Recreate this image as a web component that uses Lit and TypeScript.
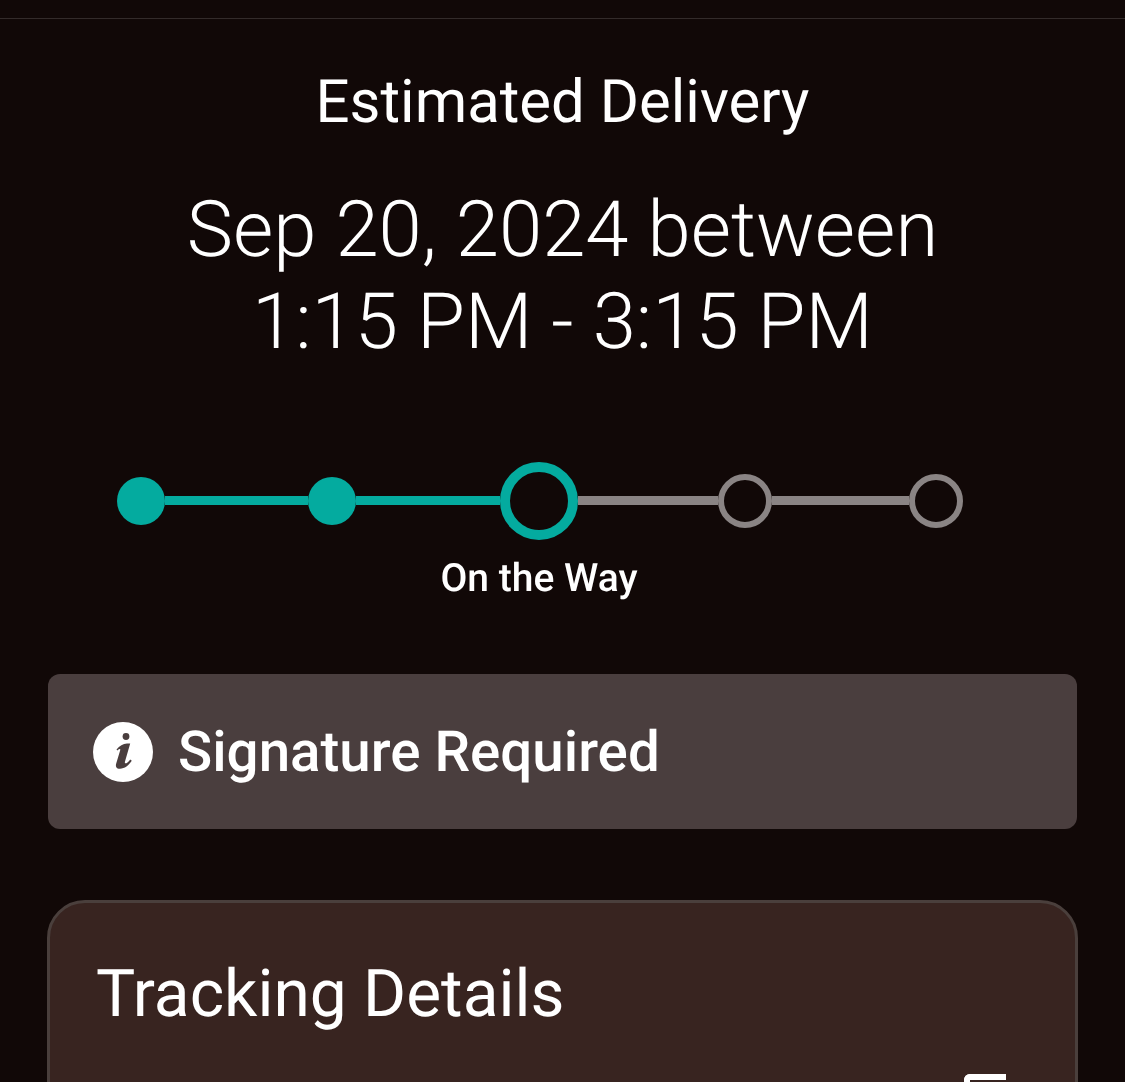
import { LitElement, html, css } from "lit";
import { customElement } from "lit/decorators.js";

@customElement("app-root")
export class AppRoot extends LitElement {
  static styles = css`
    :host {
      display: block;
      height: 1082px;
      overflow: hidden;
      background: #110807;
      color: #fff;
      font-family: Roboto, "Liberation Sans", sans-serif;
    }

    /* own layer: keeps the text on grayscale antialiasing, like the phone capture */
    .page {
      will-change: transform;
      text-rendering: geometricPrecision;
    }

    .divider {
      height: 1px;
      margin-top: 18px;
      background: #332b2a;
    }

    .eta {
      display: flex;
      flex-direction: column;
      align-items: center;
      padding-top: 47px;
    }

    .eta-label {
      font-size: 59.9px;
      line-height: 72px;
      font-weight: 400;
    }

    .eta-time {
      margin-top: 47px;
      font-size: 77.9px;
      line-height: 92px;
      font-weight: 300;
      text-align: center;
    }

    .stepper {
      display: grid;
      grid-template-columns: 48px 143px 48px 144px 78px 140px 54px 137px 54px;
      align-items: center;
      justify-content: start;
      margin: 93px 0 0 117px;
    }

    .dot {
      box-sizing: border-box;
      border-radius: 50%;
      width: 48px;
      height: 48px;
      background: #04ab9f;
    }

    .dot.current {
      width: 78px;
      height: 78px;
      background: none;
      border: 10px solid #04ab9f;
    }

    .dot.todo {
      width: 54px;
      height: 54px;
      background: none;
      border: 6px solid #8a8484;
    }

    .line {
      height: 9px;
      margin-bottom: 2px;
      background: #04ab9f;
    }

    .line.todo {
      background: #8a8484;
    }

    .step-label {
      grid-column: 5;
      justify-self: center;
      white-space: nowrap;
      margin-top: 14px;
      font-size: 39px;
      line-height: 48px;
      font-weight: 500;
    }

    .notice {
      display: flex;
      align-items: center;
      gap: 25px;
      height: 155px;
      margin: 72px 48px 0;
      padding-left: 45px;
      border-radius: 12px;
      background: #4a3e3e;
      font-size: 56.5px;
      font-weight: 500;
    }

    .notice svg {
      width: 60px;
      height: 60px;
      flex: none;
    }

    .card {
      box-sizing: border-box;
      height: 300px;
      margin: 71px 47px 0;
      padding: 54px 46px 0;
      border: 3px solid #4a3f3c;
      border-radius: 38px;
      background: #382420;
    }

    .card-title {
      font-size: 65.8px;
      line-height: 76px;
      font-weight: 400;
    }

    .card-row {
      display: flex;
      justify-content: flex-end;
      margin-top: 41px;
      padding-right: 23px;
    }

    .copy {
      width: 42px;
      height: 42px;
      box-sizing: border-box;
      border: 6px solid #fff;
      border-radius: 6px 0 0 0;
      border-right: 0;
      border-bottom: 0;
    }
  `;

  render() {
    return html`
      <div class="page">
        <div class="divider"></div>
        <section class="eta">
          <div class="eta-label">Estimated Delivery</div>
          <div class="eta-time">Sep 20, 2024 between<br />1:15 PM - 3:15 PM</div>
        </section>
        <div class="stepper">
          <span class="dot"></span>
          <span class="line"></span>
          <span class="dot"></span>
          <span class="line"></span>
          <span class="dot current"></span>
          <span class="line todo"></span>
          <span class="dot todo"></span>
          <span class="line todo"></span>
          <span class="dot todo"></span>
          <div class="step-label">On the Way</div>
        </div>
        <div class="notice">
          <svg viewBox="0 0 60 60" aria-hidden="true">
            <circle cx="30" cy="30" r="30" fill="#fff" />
            <circle cx="33" cy="14.5" r="3.4" fill="#4a3e3e" />
            <path
              d="M23.5 27.5C26.5 24 30 21.5 34 21.5H37.2L32 39.5C31.4 41.5 32.8 41.8 34.2 40.8C35.4 39.9 36.4 38.8 37.2 37.6L38.8 38.8C36 43.2 31.5 46.8 27 46.8C23.3 46.8 22.3 44.6 23.2 41.5L27.2 28.2C27.6 26.8 26.5 26.5 25.4 27.4C25 27.7 24.7 28 24.4 28.5Z"
              fill="#4a3e3e"
            />
          </svg>
          <span>Signature Required</span>
        </div>
        <section class="card">
          <div class="card-title">Tracking Details</div>
          <div class="card-row"><span class="copy"></span></div>
        </section>
      </div>
    `;
  }
}
